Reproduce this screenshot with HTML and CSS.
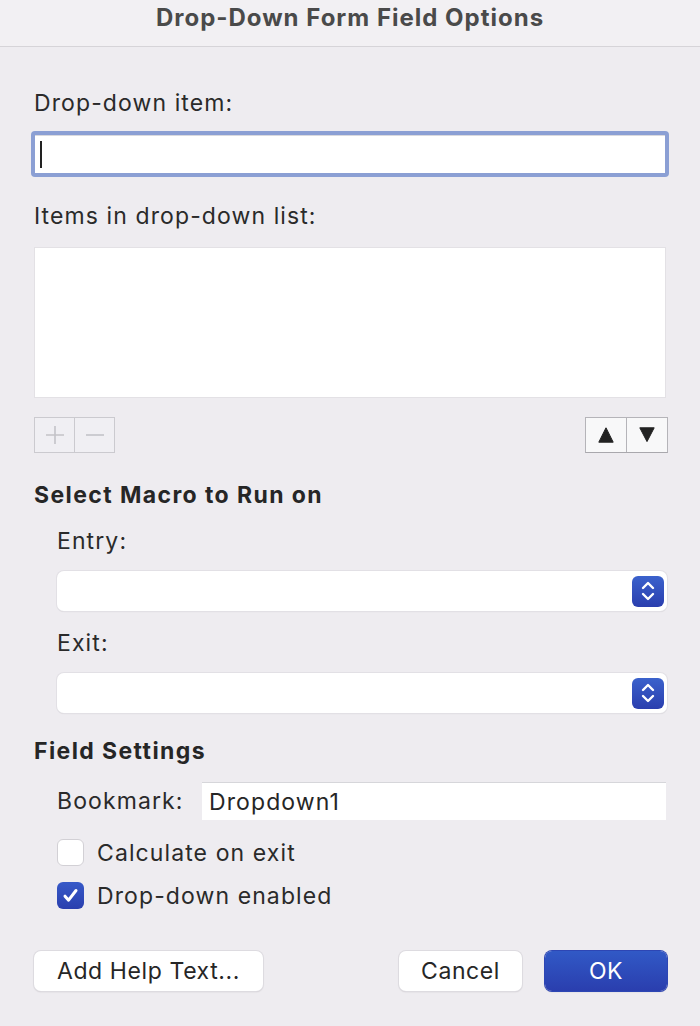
FILE: index.html
```html
<!DOCTYPE html>
<html>
<head>
<meta charset="utf-8">
<link rel="stylesheet" href="styles.css">
</head>
<body>
<div class="dialog">
  <div class="titlebar">Drop-Down Form Field Options</div>
  <div class="content">
    <div class="label first">Drop-down item:</div>
    <div class="focus-ring"><div class="text-input"><span class="caret"></span></div></div>
    <div class="label list-label">Items in drop-down list:</div>
    <div class="listbox"></div>
    <div class="list-controls">
      <div class="seg disabled">
        <div class="seg-cell">
          <svg width="22" height="22" viewBox="0 0 22 22"><path d="M11 2v18M2 11h18" stroke="#c4c3c8" stroke-width="1.6" fill="none"/></svg>
        </div>
        <div class="seg-cell">
          <svg width="22" height="22" viewBox="0 0 22 22"><path d="M2 11h18" stroke="#c4c3c8" stroke-width="1.6" fill="none"/></svg>
        </div>
      </div>
      <div class="seg arrows">
        <div class="seg-cell">
          <svg width="18" height="18" viewBox="0 0 18 18"><path d="M9 1.8L16.2 16.2H1.8Z" fill="#222" stroke="#222" stroke-width="1" stroke-linejoin="round"/></svg>
        </div>
        <div class="seg-cell">
          <svg width="18" height="18" viewBox="0 0 18 18"><path d="M1.8 1.8H16.2L9 15.6Z" fill="#222" stroke="#222" stroke-width="1" stroke-linejoin="round"/></svg>
        </div>
      </div>
    </div>
    <div class="heading macro">Select Macro to Run on</div>
    <div class="indent">
      <div class="label sub">Entry:</div>
      <div class="popup">
        <div class="stepper">
          <svg width="18" height="22" viewBox="0 0 18 22"><path d="M4 8l5-5 5 5M4 14l5 5 5-5" stroke="#fff" stroke-width="2.4" fill="none" stroke-linecap="round" stroke-linejoin="round"/></svg>
        </div>
      </div>
      <div class="label sub exit">Exit:</div>
      <div class="popup">
        <div class="stepper">
          <svg width="18" height="22" viewBox="0 0 18 22"><path d="M4 8l5-5 5 5M4 14l5 5 5-5" stroke="#fff" stroke-width="2.4" fill="none" stroke-linecap="round" stroke-linejoin="round"/></svg>
        </div>
      </div>
    </div>
    <div class="heading settings">Field Settings</div>
    <div class="indent">
      <div class="bookmark-row">
        <div class="bm-label">Bookmark:</div>
        <div class="bm-input">Dropdown1</div>
      </div>
      <div class="check-row first-check">
        <span class="box"></span>
        <span class="check-label">Calculate on exit</span>
      </div>
      <div class="check-row">
        <span class="box checked">
          <svg width="19" height="19" viewBox="0 0 19 19"><path d="M4 10.2l3.6 4L15 4.5" stroke="#fff" stroke-width="3" fill="none" stroke-linecap="round" stroke-linejoin="round"/></svg>
        </span>
        <span class="check-label">Drop-down enabled</span>
      </div>
    </div>
    <div class="button-row">
      <div class="btn help">Add Help Text...</div>
      <div class="right-buttons">
        <div class="btn cancel">Cancel</div>
        <div class="btn ok">OK</div>
      </div>
    </div>
  </div>
</div>
</body>
</html>
```
FILE: styles.css
```css
html, body {
  margin: 0;
  padding: 0;
  background: #eeecf0;
}
body {
  font-family: Inter, "Liberation Sans", sans-serif;
  color: #262626;
  width: 700px;
  height: 1026px;
  overflow: hidden;
}
.dialog {
  height: 1026px;
  background: #eeecf0;
}
.titlebar {
  height: 47px;
  box-sizing: border-box;
  border-bottom: 1px solid #d6d4d8;
  background: #f2f0f3;
  text-align: center;
  font-weight: 700;
  font-size: 24px;
  line-height: 28px;
  letter-spacing: 1px;
  color: #4a4a4a;
  padding-top: 4px;
}
.content {
  padding: 0 34px;
}
.label {
  font-size: 23px;
  line-height: 26px;
  letter-spacing: 1.1px;
  color: #2a2a2a;
}
.label.first {
  margin-top: 43px;
}
.focus-ring {
  margin: 15px -3px 0;
  height: 46px;
  box-sizing: border-box;
  padding: 4px;
  background: #8b9fd4;
  border-radius: 4px;
}
.text-input {
  height: 100%;
  background: #fff;
  border-top: 1px solid #d9d9de;
  box-sizing: border-box;
  display: flex;
  align-items: center;
  padding-left: 5px;
}
.caret {
  width: 2px;
  height: 27px;
  background: #222;
}
.list-label {
  margin-top: 26px;
}
.listbox {
  margin-top: 18px;
  height: 151px;
  background: #fff;
  border: 1px solid #e3e1e5;
  box-sizing: border-box;
}
.list-controls {
  margin-top: 19px;
  display: flex;
  justify-content: space-between;
}
.seg {
  display: flex;
  height: 36px;
  border: 1px solid #cbcacf;
  box-sizing: border-box;
}
.seg-cell {
  width: 39px;
  display: flex;
  align-items: center;
  justify-content: center;
  background: #f0eff3;
}
.seg-cell + .seg-cell {
  border-left: 1px solid #cbcacf;
}
.seg.arrows {
  border-color: #b5b4b9;
  border-bottom-color: #a9a8ad;
  margin-right: -2px;
}
.seg.arrows .seg-cell {
  width: 40px;
  background: #f8f8f9;
}
.seg.arrows .seg-cell + .seg-cell {
  border-left-color: #b5b4b9;
}
.heading {
  font-size: 23px;
  line-height: 26px;
  letter-spacing: 1.4px;
  font-weight: 700;
  color: #262626;
}
.heading.macro {
  margin-top: 29px;
}
.indent {
  padding-left: 23px;
}
.label.sub {
  margin-top: 20px;
}
.label.sub.exit {
  margin-top: 19px;
}
.popup {
  margin-top: 17px;
  margin-right: -1px;
  height: 40px;
  background: #fff;
  border-radius: 7px;
  box-shadow: 0 0 0 1px #e2e0e5, 0 1px 1px rgba(0,0,0,0.12);
  display: flex;
  align-items: center;
  justify-content: flex-end;
  padding-right: 3px;
}
.stepper {
  width: 32px;
  height: 31px;
  border-radius: 6px;
  background: linear-gradient(#3b62cc, #2a3eae);
  display: flex;
  align-items: center;
  justify-content: center;
}
.heading.settings {
  margin-top: 25px;
}
.bookmark-row {
  margin-top: 18px;
  display: flex;
  align-items: center;
}
.bm-label {
  width: 145px;
  font-size: 23px;
  letter-spacing: 1.1px;
  color: #2a2a2a;
}
.bm-input {
  flex: 1;
  height: 38px;
  background: #fff;
  border-top: 1px solid #d6d6da;
  box-sizing: border-box;
  display: flex;
  align-items: center;
  padding-left: 7px;
  font-size: 23px;
  letter-spacing: 1.1px;
  color: #262626;
}
.check-row {
  display: flex;
  align-items: center;
  margin-top: 16px;
  height: 27px;
}
.check-row.first-check {
  margin-top: 19px;
}
.box {
  width: 27px;
  height: 27px;
  box-sizing: border-box;
  border-radius: 6px;
  background: #fff;
  border: 1px solid #d2d0d5;
  display: flex;
  align-items: center;
  justify-content: center;
}
.box.checked {
  background: linear-gradient(#3659c8, #2a3fae);
  border: none;
}
.check-label {
  margin-left: 13px;
  font-size: 23px;
  letter-spacing: 1.1px;
  color: #2a2a2a;
}
.button-row {
  margin-top: 42px;
  display: flex;
  justify-content: space-between;
}
.right-buttons {
  display: flex;
  gap: 23px;
  margin-right: -1px;
}
.btn {
  height: 40px;
  box-sizing: border-box;
  border-radius: 7px;
  background: #fff;
  box-shadow: 0 0 0 1px #dddbe0, 0 1px 1.5px rgba(0,0,0,0.18);
  display: flex;
  align-items: center;
  justify-content: center;
  font-size: 23px;
  letter-spacing: 0.6px;
  color: #262626;
}
.btn.help {
  width: 229px;
}
.btn.cancel {
  width: 123px;
}
.btn.ok {
  width: 122px;
  background: linear-gradient(#3159c6, #2a3eae);
  color: #fff;
  box-shadow: 0 0 0 1px #2d46b4, 0 1px 1.5px rgba(0,0,0,0.18);
}
```
